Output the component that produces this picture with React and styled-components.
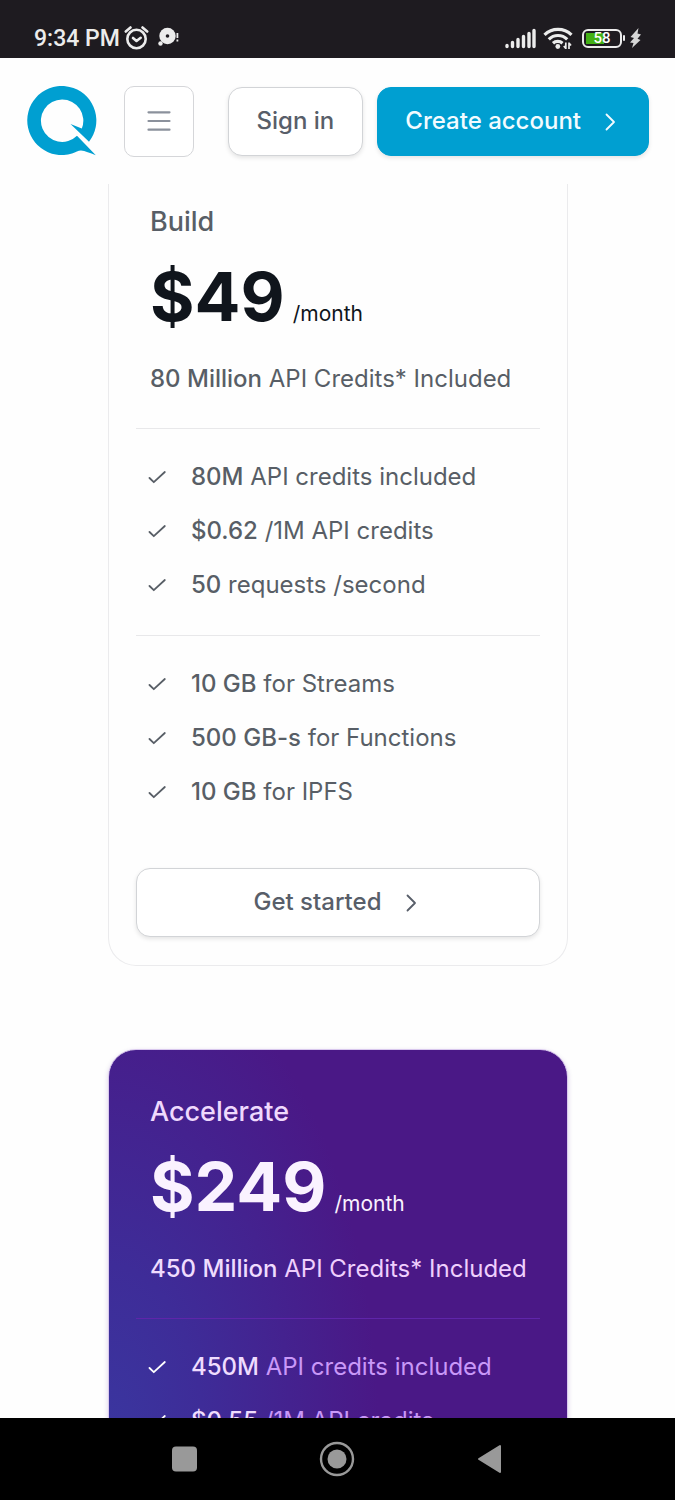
import React from "react";
import styled, { createGlobalStyle, css } from "styled-components";

const GlobalStyle = createGlobalStyle`
  *, *::before, *::after { box-sizing: border-box; }
  body { margin: 0; background: #fff; font-family: Inter, "Liberation Sans", sans-serif; }
  button { font: inherit; cursor: pointer; }
`;

const Screen = styled.div`
  display: flex;
  flex-direction: column;
  height: 100vh;
  background: #fefefe;
`;

const StatusBar = styled.div`
  display: flex;
  flex: none;
  align-items: flex-end;
  justify-content: space-between;
  height: 58px;
  padding: 0 34px 7px;
  background: #1e1b20;
  color: #ececec;
`;

const StatusGroup = styled.div`
  display: flex;
  align-items: center;
  gap: ${(p) => p.$gap}px;
  height: 26px;
`;

const Clock = styled.time`
  align-self: flex-end;
  font: 500 23px/24px Roboto, sans-serif;
`;

const Battery = styled.div`
  display: flex;
  align-items: center;
  padding-left: 4px;
`;

const BatteryShell = styled.div`
  display: flex;
  align-items: center;
  justify-content: center;
  width: 40px;
  height: 19px;
  border: 2px solid #ececec;
  border-radius: 6px;
  background: linear-gradient(#43b016, #43b016) 2px 2px / 18px 11px no-repeat;
  font: 500 15px/16px Roboto, sans-serif;
  color: #fff;
`;

const BatteryTip = styled.div`
  width: 2px;
  height: 6px;
  margin-left: 1px;
  border-radius: 1px;
  background: #ececec;
`;

const Header = styled.header`
  display: flex;
  flex: none;
  align-items: center;
  height: 126px;
  padding: 0 26px 0 27px;
  background: #fefefe;
`;

const LogoLink = styled.a`
  display: block;
  width: 70px;
  height: 70px;
`;

const MenuButton = styled.button`
  display: flex;
  align-items: center;
  justify-content: center;
  width: 70px;
  height: 71px;
  margin: 0 auto 0 27px;
  padding: 0;
  border: 1px solid #d5d6d9;
  border-radius: 10px;
  background: #fff;
`;

const Actions = styled.div`
  display: flex;
  gap: 14px;
`;

const Button = styled.button`
  display: flex;
  align-items: center;
  justify-content: center;
  gap: 17px;
  width: ${(p) => (p.$wide ? "100%" : "auto")};
  height: 69px;
  padding: 0 28px 1px;
  border: 1px solid #d2d4d7;
  border-radius: 14px;
  background: #fff;
  box-shadow: 0 2px 4px rgba(0, 0, 0, 0.1);
  color: #585e69;
  font-size: 24px;
  font-weight: 500;
  line-height: 34px;
  white-space: nowrap;
  ${(p) =>
    p.$primary &&
    css`
      padding-left: 27px;
      padding-right: 26px;
      border-color: #009fd1;
      background: #009fd1;
      color: #f2fbff;
    `}
`;

const Main = styled.main`
  display: flex;
  flex: 1;
  flex-direction: column;
  gap: 83px;
  min-height: 0;
  padding: 0 107px 0 108px;
  overflow: hidden auto;
  scrollbar-width: none;
`;

const themes = {
  light: css`
    --name: #585e66;
    --price: #10151c;
    --strong: #585e66;
    --summary: #585e66;
    --text: #585e66;
    --line: #e8e8ea;
    --check: #585e66;
    padding-top: 18px;
    border: 1px solid #ebebed;
    border-top: 0;
    border-radius: 0 0 28px 28px;
  `,
  purple: css`
    --name: #efd9fd;
    --price: #faf2ff;
    --strong: #efdcfe;
    --summary: #efcffd;
    --text: #c998f8;
    --line: #5f25aa;
    --check: #fff;
    padding-top: 42px;
    border: 1px solid #d9c8ee;
    border-radius: 28px;
    background: radial-gradient(ellipse 270px 500px at 0 390px, #3a369f 0%, #3e2c98 35%, #4a1886 100%);
    box-shadow: 0 2px 5px rgba(74, 24, 134, 0.2);
  `,
};

const Card = styled.article`
  flex: none;
  padding: 0 27px 28px;
  ${(p) => themes[p.$tone]}
`;

const PlanHead = styled.header`
  padding: 0 14px 32px;
`;

const PlanName = styled.h2`
  margin: 0;
  color: var(--name);
  font-size: 27px;
  font-weight: 500;
  line-height: 40px;
`;

const Price = styled.p`
  margin: 14px 0 26px;
  color: var(--price);
  font-size: 68px;
  font-weight: 700;
  line-height: 80px;
`;

const Period = styled.span`
  margin-left: 8px;
  font-size: 21px;
  font-weight: 400;
  line-height: 24px;
`;

const Summary = styled.p`
  margin: 0;
  color: var(--summary);
  font-size: 24px;
  line-height: 34px;
  white-space: nowrap;
`;

const Strong = styled.strong`
  color: var(--strong);
  font-weight: 500;
`;

const Features = styled.ul`
  display: flex;
  flex-direction: column;
  gap: 20px;
  margin: 0;
  padding: 31px 0 33px 12px;
  border-top: 1px solid var(--line);
  list-style: none;
`;

const Feature = styled.li`
  display: flex;
  align-items: center;
  gap: 25px;
  color: var(--text);
  font-size: 24px;
  line-height: 34px;
  white-space: nowrap;
`;

const CardAction = styled.div`
  padding-top: 26px;
`;

const SystemNav = styled.nav`
  display: flex;
  flex: none;
  align-items: center;
  justify-content: space-between;
  height: 82px;
  padding: 0 172px 0 171px;
  background: #000;
`;

const NavButton = styled.button`
  display: flex;
  padding: 0;
  border: 0;
  background: none;
`;

const AlarmIcon = () => (
  <svg width="26" height="26" viewBox="0 0 26 26" fill="none" stroke="#ececec" strokeWidth="2.6" strokeLinecap="round">
    <circle cx="12.5" cy="14" r="9.2" />
    <path d="M1.800 6.500 6.500 2.500M23.200 6.500 18.500 2.500" />
    <path d="m9 13 3.500 3 4.200-3.200" strokeLinejoin="round" />
  </svg>
);

const ChatIcon = () => (
  <svg width="26" height="24" viewBox="-4 0 26 24" fill="#ececec">
    <circle cx="9.500" cy="10" r="8.200" />
    <circle cx="2.500" cy="17.500" r="2.200" />
    <circle cx="9.500" cy="10" r="1.800" fill="#1e1b20" />
    <path d="M18.500 7h1.800v5H18.500zM18.500 13.500h1.800v2H18.500z" />
  </svg>
);

const SignalIcon = () => (
  <svg width="33" height="21" viewBox="0 0 33 21" stroke="#ececec" strokeWidth="3.400" strokeLinecap="round">
    <path d="M2 18.500v-1M7.500 18.500v-4M13 18.500v-7M18.500 18.500v-10M24 18.500v-13M29 18.500V2.500" />
  </svg>
);

const WifiIcon = () => (
  <svg width="30" height="24" viewBox="0 0 30 24" fill="none" stroke="#ececec" strokeWidth="3.200">
    <path d="M1.500 8.800a19.500 19.500 0 0 1 27 0" />
    <path d="M5.800 13.300a13 13 0 0 1 18.400 0" />
    <path d="M10 17.300a7 7 0 0 1 9.500 0" />
    <circle cx="14.800" cy="20.500" r="2.400" fill="#ececec" stroke="none" />
    <path d="M22.800 16.500v6.500M26 16.500v6.500M20.800 20l2 2.500M28 19.500l-2-2.500" strokeWidth="1.700" />
  </svg>
);

const BoltIcon = () => (
  <svg width="11" height="20" viewBox="0 0 11 20" fill="#d6d6d6">
    <path d="M8.500 0 .5 9l3.500 1L0 14.500l3.500.5L2 20l8.500-8-3-1.200L11 6.500 7.500 5.500z" />
  </svg>
);

const Logo = () => (
  <svg width="70" height="70" viewBox="0 0 70 70" fill="#009fd1">
    <path d="M62 55.800A34.550 34.550 0 1 0 45 67.500C49 66.200 51 64.600 54 64.600C58 64.900 63 67.200 68.800 69.300L50 49.800A21.200 21.200 0 1 1 54.800 42.600L43.500 38Z" />
  </svg>
);

const MenuIcon = () => (
  <svg width="24" height="22" viewBox="0 0 24 22" stroke="#8b919c" strokeWidth="2.200" strokeLinecap="round">
    <path d="M1.500 2.300h21M1.500 11h21M1.500 19.700h21" />
  </svg>
);

const Chevron = () => (
  <svg width="24" height="24" viewBox="0 0 24 24" fill="none" stroke="currentColor" strokeWidth="1.800" strokeLinecap="round" strokeLinejoin="round">
    <path d="m8.500 5.500 7.500 7.500-7.500 7.500" />
  </svg>
);

const Check = () => (
  <svg width="18" height="14" viewBox="0 0 18 14" fill="none" stroke="var(--check)" strokeWidth="1.800" strokeLinecap="round" strokeLinejoin="round">
    <path d="M1.500 8 5.800 12.200 16.800 2" />
  </svg>
);

const plans = [
  {
    tone: "light",
    name: "Build",
    price: "$49",
    credits: "80 Million",
    groups: [
      [["80M", "API credits included"], ["$0.62", "/1M API credits"], ["50", "requests /second"]],
      [["10 GB", "for Streams"], ["500 GB-s", "for Functions"], ["10 GB", "for IPFS"]],
    ],
    action: "Get started",
  },
  {
    tone: "purple",
    name: "Accelerate",
    price: "$249",
    credits: "450 Million",
    groups: [[["450M", "API credits included"], ["$0.55", "/1M API credits"]]],
  },
];

const PlanCard = ({ plan }) => (
  <Card $tone={plan.tone}>
    <PlanHead>
      <PlanName>{plan.name}</PlanName>
      <Price>
        {plan.price}
        <Period>/month</Period>
      </Price>
      <Summary>
        <Strong>{plan.credits}</Strong> API Credits* Included
      </Summary>
    </PlanHead>
    {plan.groups.map((group, i) => (
      <Features key={i}>
        {group.map(([amount, label]) => (
          <Feature key={label}>
            <Check />
            <span>
              <Strong>{amount}</Strong> {label}
            </span>
          </Feature>
        ))}
      </Features>
    ))}
    {plan.action && (
      <CardAction>
        <Button $wide>
          {plan.action}
          <Chevron />
        </Button>
      </CardAction>
    )}
  </Card>
);

export default function App() {
  return (
    <Screen>
      <GlobalStyle />
      <StatusBar>
        <StatusGroup $gap={4}>
          <Clock>9:34 PM</Clock>
          <AlarmIcon />
          <ChatIcon />
        </StatusGroup>
        <StatusGroup $gap={5}>
          <SignalIcon />
          <WifiIcon />
          <Battery>
            <BatteryShell>58</BatteryShell>
            <BatteryTip />
          </Battery>
          <BoltIcon />
        </StatusGroup>
      </StatusBar>
      <Header>
        <LogoLink href="#" aria-label="Home">
          <Logo />
        </LogoLink>
        <MenuButton aria-label="Menu">
          <MenuIcon />
        </MenuButton>
        <Actions>
          <Button>Sign in</Button>
          <Button $primary>
            Create account
            <Chevron />
          </Button>
        </Actions>
      </Header>
      <Main>
        {plans.map((plan) => (
          <PlanCard key={plan.name} plan={plan} />
        ))}
      </Main>
      <SystemNav aria-label="System">
        <NavButton aria-label="Recent apps">
          <svg width="27" height="26" viewBox="0 0 27 26" fill="#999">
            <rect x="1" y="0.500" width="25" height="25" rx="4" />
          </svg>
        </NavButton>
        <NavButton aria-label="Home screen">
          <svg width="36" height="36" viewBox="0 0 36 36" fill="#999">
            <circle cx="18" cy="18" r="16" fill="none" stroke="#999" strokeWidth="2.400" />
            <circle cx="18" cy="18" r="9.500" />
          </svg>
        </NavButton>
        <NavButton aria-label="Back">
          <svg width="27" height="30" viewBox="0 0 27 30" fill="#999" stroke="#999" strokeWidth="2" strokeLinejoin="round">
            <path d="M3 15 24 2v26z" />
          </svg>
        </NavButton>
      </SystemNav>
    </Screen>
  );
}
